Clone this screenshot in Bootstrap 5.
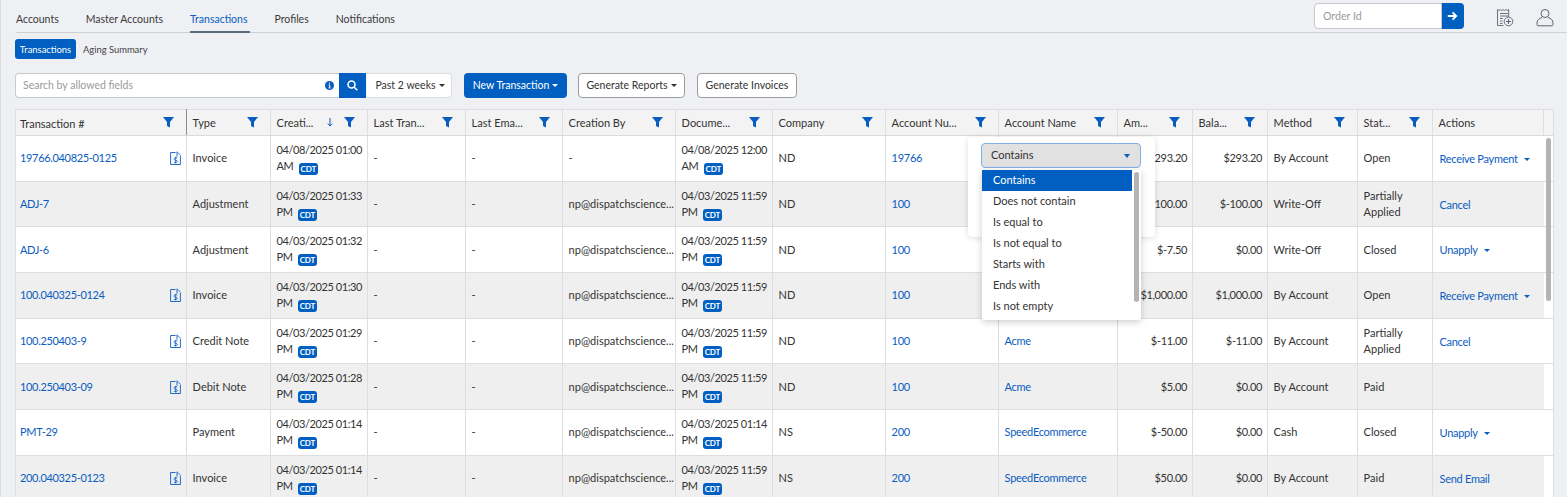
<!DOCTYPE html>
<html lang="en">
<head>
<meta charset="utf-8">
<title>Transactions</title>
<link href="https://cdn.jsdelivr.net/npm/bootstrap@5.3.0/dist/css/bootstrap.min.css" rel="stylesheet">
<style>
html,body{height:497px;overflow:hidden}
body{background:#eff0f4;font-family:"Lato",sans-serif;font-size:11px;color:#333;border-left:1px solid #dcdcdc;position:relative}
a{color:#0a5cbf;text-decoration:none}
.topbar{height:33px;margin-left:15px;border-bottom:1px solid #cfd0d2;padding-right:13px}
.tabs{gap:27px;height:32px}
.tabs .nav-link{padding:0;color:#3a3a3a;font-size:10.5px;height:32px;line-height:38px;border-radius:0;position:relative}
.tabs .nav-link.active{color:#0a5cbf;border-bottom:2px solid #5b6b80;padding-right:3px;margin-right:-3px;height:33px}
.orderbox{width:150px;height:26px;margin-top:3px}
.orderbox .form-control{font-size:10.6px;height:26px;min-height:0;padding:0 8px;border-color:#c6c7ca;color:#333;border-radius:4px 0 0 4px}
.form-control::placeholder{color:#9a9a9a}
.sqbtn{background:#005fc1;border:0;padding:0;color:#fff;border-radius:0 4px 4px 0;display:flex;align-items:center;justify-content:center}
.orderbox .sqbtn{width:23px;height:26px}
.topicons{gap:22px;margin-left:32px;margin-top:8px}
.subtabs{margin:6px 0 0 14px;gap:7px;height:20px}
.subtabs .nav-link{font-size:9.4px;padding:0;height:20px;line-height:21px;color:#444;border-radius:3px}
.subtabs .nav-link.active{background:#005fc1;color:#fff;width:61px;text-align:center}
.toolbar{margin:14px 0 0 14px;height:25px}
.searchbox{width:352px;height:25px;flex-wrap:nowrap}
.searchbox .inpwrap{width:325px;background:#fff;border:1px solid #c9cacc;border-right:0;border-radius:4px 0 0 4px;height:25px;padding-right:6px}
.searchbox .form-control{border:0;background:transparent;font-size:10.5px;height:23px;min-height:0;padding:0 7px 1px;box-shadow:none}
.searchbox .sqbtn{width:27px;height:25px;border-radius:0}
.periodbtn,.outbtn,.mainbtn{font-size:10.5px;height:25px;padding:0;display:flex;align-items:center;justify-content:center;color:#333;--bs-btn-font-size:10.5px}
.periodbtn{width:85px;background:#fff;border:1px solid #dcdddf;border-left:0;border-radius:0 4px 4px 0;padding-left:2px}
.mainbtn{width:103px;margin-left:12px;background:#005fc1;color:#fff;border:0;border-radius:4px}
.mainbtn:hover{background:#005fc1;color:#fff}
.outbtn{background:#fff;border:1px solid #9c9c9c;border-radius:4px}
.repbtn{width:107px;margin-left:11px}
.invbtn{width:100px;margin-left:12px}
.dropdown-toggle::after{margin-left:3px;border-top-width:3.5px;border-right-width:3px;border-left-width:3px;vertical-align:2px}
.gridwrap{margin:11px 0 0 14px;width:1539px;position:relative}
.tx{table-layout:fixed;width:1538px;margin:0;border-collapse:collapse;--bs-table-bg:transparent;background:#fff;border:1px solid #dddee0;color:#333}
.tx th,.tx td{border:1px solid #dddee0;padding:0 5px 0 5.6px;font-size:11px;vertical-align:middle;font-weight:400;line-height:16px;box-shadow:none;color:#333}
.tx th{background:#f3f3f3;height:26px;font-size:11px;border-bottom:1px solid #d9dadc}
.tx th .hd{display:flex;align-items:center;justify-content:space-between;padding-right:7px;white-space:nowrap}
.tx th .hd .rt{display:flex;align-items:center;gap:11px}
.tx th.firstc{border-right:1px solid #8d8d8d;padding-left:4px}
.tx th.firstc .hd span{position:relative;top:1px}
.tx td.firstc{padding-left:4px}
.tx td{height:45.7px;background:#fff}
.tx tbody tr:nth-child(even) td{background:#efefef}
.tx td.num{text-align:right;letter-spacing:-.35px}
.tx td a{color:#0a5cbf;letter-spacing:-.28px}
.tx td.firstc a{letter-spacing:-.33px}
.tx td.dt{letter-spacing:-.42px}
.tx td.act{padding-left:6.500px;border-right:0;padding-top:1px}
.tx td.lastcol,.tx tbody tr:nth-child(even) td.lastcol{border-left:0;background:#fff}
.tx th.lastcol{background:#f3f3f3}
.txlink{display:flex;align-items:center;justify-content:space-between}
.txlink svg{flex:none}
.tzb{display:inline-block;background:#005fc1;color:#fff;font-size:8px;font-weight:700;line-height:12px;height:12px;width:19px;text-align:center;border-radius:3px;margin-left:3px;vertical-align:-2px;letter-spacing:-.1px}
.actcaret{display:inline-block;width:0;height:0;border-left:3px solid transparent;border-right:3px solid transparent;border-top:3.5px solid #0a5cbf;margin-left:6px;vertical-align:2px}
.gridscroll{position:absolute;left:1531px;top:29px;width:5px;height:163px;background:#b4b4b4;border-radius:3px}
.filterpop{position:absolute;left:953px;top:28px;width:187px;height:100px;background:#fff;border-radius:4px;box-shadow:0 1px 6px rgba(0,0,0,.14);padding:6px 13px}
.filtersel{width:160px;height:25px;background:#e1e1e1;border:1px solid #7fb0e6;border-radius:4px;font-size:11px;color:#333;display:flex;align-items:center;justify-content:space-between;padding:0 9px;margin:0}
.filtersel i{display:block;width:0;height:0;border-left:3.500px solid transparent;border-right:3.500px solid transparent;border-top:4.500px solid #0a5cbf;margin-right:1px}
.filterlist{display:block;position:absolute;left:14px;top:33px;width:159px;height:150px;padding:0;margin:0;border:0;border-radius:0 0 2px 2px;box-shadow:0 2px 7px rgba(0,0,0,.2);min-width:0;overflow:hidden;background:#fff}
.filterlist .dropdown-item{width:150px;height:21px;line-height:20px;padding:0 11px;font-size:11px;color:#333}
.filterlist .dropdown-item.active{background:#005fc1;color:#fff}
.listscroll{position:absolute;left:152px;top:2px;width:5px;height:130px;background:#b4b4b4;border-radius:3px}
</style>
</head>
<body>
<svg width="0" height="0" class="d-block position-absolute">
  <defs>
    <symbol id="fun" viewBox="0 0 11 11"><path d="M0 0h11L7 5v5.600L4 9V5z" fill="#0a5cbf"/></symbol>
    <symbol id="doc" viewBox="0 0 11 14"><path d="M5.600 1.500H.6v12h9.800V4.600M7 .6v5" fill="none" stroke="#0a5cbf" stroke-width=".9"/><path d="M7.400 1.200l3 3" stroke="#0a5cbf" fill="none" stroke-width=".8"/><path d="M7.300 6.900C5.200 6.500 3.700 7.200 3.900 8.300c.2 1.100 3.500.9 3.600 2.100.1 1-1.500 1.400-3.600 1M5.700 5.800v6.800" fill="none" stroke="#0a5cbf" stroke-width=".8"/></symbol>
  </defs>
</svg>

<header class="topbar d-flex justify-content-between">
  <nav class="nav tabs">
    <a class="nav-link" href="#">Accounts</a>
    <a class="nav-link" href="#">Master Accounts</a>
    <a class="nav-link active" href="#">Transactions</a>
    <a class="nav-link" href="#">Profiles</a>
    <a class="nav-link" href="#">Notifications</a>
  </nav>
  <div class="d-flex">
    <div class="input-group orderbox">
      <input class="form-control" placeholder="Order Id">
      <button class="sqbtn" type="button" aria-label="Go"><svg width="11" height="10" viewBox="0 0 11 10"><path d="M.8 5h8M5.600 1.300L9.200 5 5.600 8.700" fill="none" stroke="#fff" stroke-width="1.900"/></svg></button>
    </div>
    <div class="d-flex topicons">
      <svg width="18" height="19" viewBox="0 0 18 19" fill="none" stroke="#5c6470" stroke-width=".9"><path d="M1.500 1.500l1.400 1 1.400-1 1.400 1 1.400-1 1.400 1 1.400-1 1.400 1 1.400-1V9M1.500 1.500V17.500h6"/><path d="M4 5.500h8M4 8h8M4 10.500h3M4 13h2.500M4 15.500h2.500"/><circle cx="12.500" cy="13.500" r="4.300"/><path d="M12.500 11v5M10 13.500h5" stroke-width="1.100"/></svg>
      <svg width="18" height="19" viewBox="0 0 18 19" fill="none" stroke="#5c6470" stroke-width="1"><circle cx="9" cy="5.500" r="4"/><path d="M6 9.500C3 10.500 1 12 1 15v1.500c0 .8.500 1.300 1.300 1.300h13.400c.8 0 1.300-.5 1.300-1.300V15c0-3-2-4.500-5-5.500"/></svg>
    </div>
  </div>
</header>

<nav class="nav subtabs">
  <a class="nav-link active" href="#">Transactions</a>
  <a class="nav-link" href="#">Aging Summary</a>
</nav>

<div class="d-flex toolbar">
  <div class="input-group searchbox">
    <div class="d-flex align-items-center inpwrap">
      <input class="form-control" placeholder="Search by allowed fields">
      <svg width="9" height="9" viewBox="0 0 9 9" class="flex-shrink-0"><circle cx="4.500" cy="4.500" r="4.500" fill="#0a5cbf"/><path d="M4.500 1.600v1.200M3.600 4h1.100v2.800M3.500 6.900h2.100" stroke="#fff" stroke-width="1" fill="none"/></svg>
    </div>
    <button class="sqbtn" type="button" aria-label="Search"><svg width="11" height="11" viewBox="0 0 11 11" fill="none" stroke="#fff" stroke-width="1.600"><circle cx="4.500" cy="4.500" r="3.500"/><path d="M7 7l3.300 3.300"/></svg></button>
  </div>
  <button class="btn periodbtn dropdown-toggle" type="button">Past 2 weeks</button>
  <button class="btn mainbtn dropdown-toggle" type="button">New Transaction</button>
  <button class="btn outbtn repbtn dropdown-toggle" type="button">Generate Reports</button>
  <button class="btn outbtn invbtn" type="button">Generate Invoices</button>
</div>

<div class="gridwrap">
<table class="table tx">
  <colgroup>
    <col style="width:171px"><col style="width:84px"><col style="width:97px"><col style="width:98px"><col style="width:97px"><col style="width:113px"><col style="width:97px"><col style="width:113px"><col style="width:113px"><col style="width:119px"><col style="width:75px"><col style="width:75px"><col style="width:90px"><col style="width:75px"><col style="width:111px"><col style="width:10px">
  </colgroup>
  <thead>
    <tr>
      <th class="firstc"><div class="hd"><span>Transaction #</span><svg width="11" height="11"><use href="#fun"/></svg></div></th>
      <th><div class="hd"><span>Type</span><svg width="11" height="11"><use href="#fun"/></svg></div></th>
      <th><div class="hd"><span>Creati...</span><span class="rt"><svg width="6" height="9" viewBox="0 0 6 9"><path d="M3 0v8M.8 5.600L3 8l2.200-2.400" fill="none" stroke="#0a5cbf" stroke-width="1"/></svg><svg width="11" height="11"><use href="#fun"/></svg></span></div></th>
      <th><div class="hd"><span>Last Tran...</span><svg width="11" height="11"><use href="#fun"/></svg></div></th>
      <th><div class="hd"><span>Last Ema...</span><svg width="11" height="11"><use href="#fun"/></svg></div></th>
      <th><div class="hd"><span>Creation By</span><svg width="11" height="11"><use href="#fun"/></svg></div></th>
      <th><div class="hd"><span>Docume...</span><svg width="11" height="11"><use href="#fun"/></svg></div></th>
      <th><div class="hd"><span>Company</span><svg width="11" height="11"><use href="#fun"/></svg></div></th>
      <th><div class="hd"><span>Account Nu...</span><svg width="11" height="11"><use href="#fun"/></svg></div></th>
      <th><div class="hd"><span>Account Name</span><svg width="11" height="11"><use href="#fun"/></svg></div></th>
      <th><div class="hd"><span>Am...</span><svg width="11" height="11"><use href="#fun"/></svg></div></th>
      <th><div class="hd"><span>Bala...</span><svg width="11" height="11"><use href="#fun"/></svg></div></th>
      <th><div class="hd"><span>Method</span><svg width="11" height="11"><use href="#fun"/></svg></div></th>
      <th><div class="hd"><span>Stat...</span><svg width="11" height="11"><use href="#fun"/></svg></div></th>
      <th><div class="hd"><span>Actions</span></div></th>
      <th class="lastcol"></th>
    </tr>
  </thead>
  <tbody>
    <tr><td class="firstc"><div class="txlink"><a href="#">19766.040825-0125</a><svg width="11" height="14"><use href="#doc"/></svg></div></td><td>Invoice</td><td class="dt">04/08/2025 01:00<br>AM <span class="tzb">CDT</span></td><td>-</td><td>-</td><td>-</td><td class="dt">04/08/2025 12:00<br>AM <span class="tzb">CDT</span></td><td>ND</td><td><a href="#">19766</a></td><td><a href="#">Acme</a></td><td class="num">$293.20</td><td class="num">$293.20</td><td>By Account</td><td>Open</td><td class="act"><a href="#">Receive Payment<span class="actcaret"></span></a></td><td class="lastcol"></td></tr>
    <tr><td class="firstc"><a href="#">ADJ-7</a></td><td>Adjustment</td><td class="dt">04/03/2025 01:33<br>PM <span class="tzb">CDT</span></td><td>-</td><td>-</td><td>np@dispatchscience...</td><td class="dt">04/03/2025 11:59<br>PM <span class="tzb">CDT</span></td><td>ND</td><td><a href="#">100</a></td><td><a href="#">Acme</a></td><td class="num">$-100.00</td><td class="num">$-100.00</td><td>Write-Off</td><td>Partially<br>Applied</td><td class="act"><a href="#">Cancel</a></td><td class="lastcol"></td></tr>
    <tr><td class="firstc"><a href="#">ADJ-6</a></td><td>Adjustment</td><td class="dt">04/03/2025 01:32<br>PM <span class="tzb">CDT</span></td><td>-</td><td>-</td><td>np@dispatchscience...</td><td class="dt">04/03/2025 11:59<br>PM <span class="tzb">CDT</span></td><td>ND</td><td><a href="#">100</a></td><td><a href="#">Acme</a></td><td class="num">$-7.50</td><td class="num">$0.00</td><td>Write-Off</td><td>Closed</td><td class="act"><a href="#">Unapply<span class="actcaret"></span></a></td><td class="lastcol"></td></tr>
    <tr><td class="firstc"><div class="txlink"><a href="#">100.040325-0124</a><svg width="11" height="14"><use href="#doc"/></svg></div></td><td>Invoice</td><td class="dt">04/03/2025 01:30<br>PM <span class="tzb">CDT</span></td><td>-</td><td>-</td><td>np@dispatchscience...</td><td class="dt">04/03/2025 11:59<br>PM <span class="tzb">CDT</span></td><td>ND</td><td><a href="#">100</a></td><td><a href="#">Acme</a></td><td class="num">$1,000.00</td><td class="num">$1,000.00</td><td>By Account</td><td>Open</td><td class="act"><a href="#">Receive Payment<span class="actcaret"></span></a></td><td class="lastcol"></td></tr>
    <tr><td class="firstc"><div class="txlink"><a href="#">100.250403-9</a><svg width="11" height="14"><use href="#doc"/></svg></div></td><td>Credit Note</td><td class="dt">04/03/2025 01:29<br>PM <span class="tzb">CDT</span></td><td>-</td><td>-</td><td>np@dispatchscience...</td><td class="dt">04/03/2025 11:59<br>PM <span class="tzb">CDT</span></td><td>ND</td><td><a href="#">100</a></td><td><a href="#">Acme</a></td><td class="num">$-11.00</td><td class="num">$-11.00</td><td>By Account</td><td>Partially<br>Applied</td><td class="act"><a href="#">Cancel</a></td><td class="lastcol"></td></tr>
    <tr><td class="firstc"><div class="txlink"><a href="#">100.250403-09</a><svg width="11" height="14"><use href="#doc"/></svg></div></td><td>Debit Note</td><td class="dt">04/03/2025 01:28<br>PM <span class="tzb">CDT</span></td><td>-</td><td>-</td><td>np@dispatchscience...</td><td class="dt">04/03/2025 11:59<br>PM <span class="tzb">CDT</span></td><td>ND</td><td><a href="#">100</a></td><td><a href="#">Acme</a></td><td class="num">$5.00</td><td class="num">$0.00</td><td>By Account</td><td>Paid</td><td class="act"></td><td class="lastcol"></td></tr>
    <tr><td class="firstc"><a href="#">PMT-29</a></td><td>Payment</td><td class="dt">04/03/2025 01:14<br>PM <span class="tzb">CDT</span></td><td>-</td><td>-</td><td>np@dispatchscience...</td><td class="dt">04/03/2025 01:14<br>PM <span class="tzb">CDT</span></td><td>NS</td><td><a href="#">200</a></td><td><a href="#">SpeedEcommerce</a></td><td class="num">$-50.00</td><td class="num">$0.00</td><td>Cash</td><td>Closed</td><td class="act"><a href="#">Unapply<span class="actcaret"></span></a></td><td class="lastcol"></td></tr>
    <tr><td class="firstc"><div class="txlink"><a href="#">200.040325-0123</a><svg width="11" height="14"><use href="#doc"/></svg></div></td><td>Invoice</td><td class="dt">04/03/2025 01:14<br>PM <span class="tzb">CDT</span></td><td>-</td><td>-</td><td>np@dispatchscience...</td><td class="dt">04/03/2025 11:59<br>PM <span class="tzb">CDT</span></td><td>NS</td><td><a href="#">200</a></td><td><a href="#">SpeedEcommerce</a></td><td class="num">$50.00</td><td class="num">$0.00</td><td>By Account</td><td>Paid</td><td class="act"><a href="#">Send Email</a></td><td class="lastcol"></td></tr>
  </tbody>
</table>
<div class="gridscroll"></div>
<div class="filterpop">
  <div class="filtersel"><span>Contains</span><i></i></div>
  <div class="dropdown-menu filterlist">
    <a class="dropdown-item active" href="#">Contains</a>
    <a class="dropdown-item" href="#">Does not contain</a>
    <a class="dropdown-item" href="#">Is equal to</a>
    <a class="dropdown-item" href="#">Is not equal to</a>
    <a class="dropdown-item" href="#">Starts with</a>
    <a class="dropdown-item" href="#">Ends with</a>
    <a class="dropdown-item" href="#">Is not empty</a>
    <div class="listscroll"></div>
  </div>
</div>
</div>
<script src="https://cdn.jsdelivr.net/npm/bootstrap@5.3.0/dist/js/bootstrap.bundle.min.js"></script>
</body>
</html>
